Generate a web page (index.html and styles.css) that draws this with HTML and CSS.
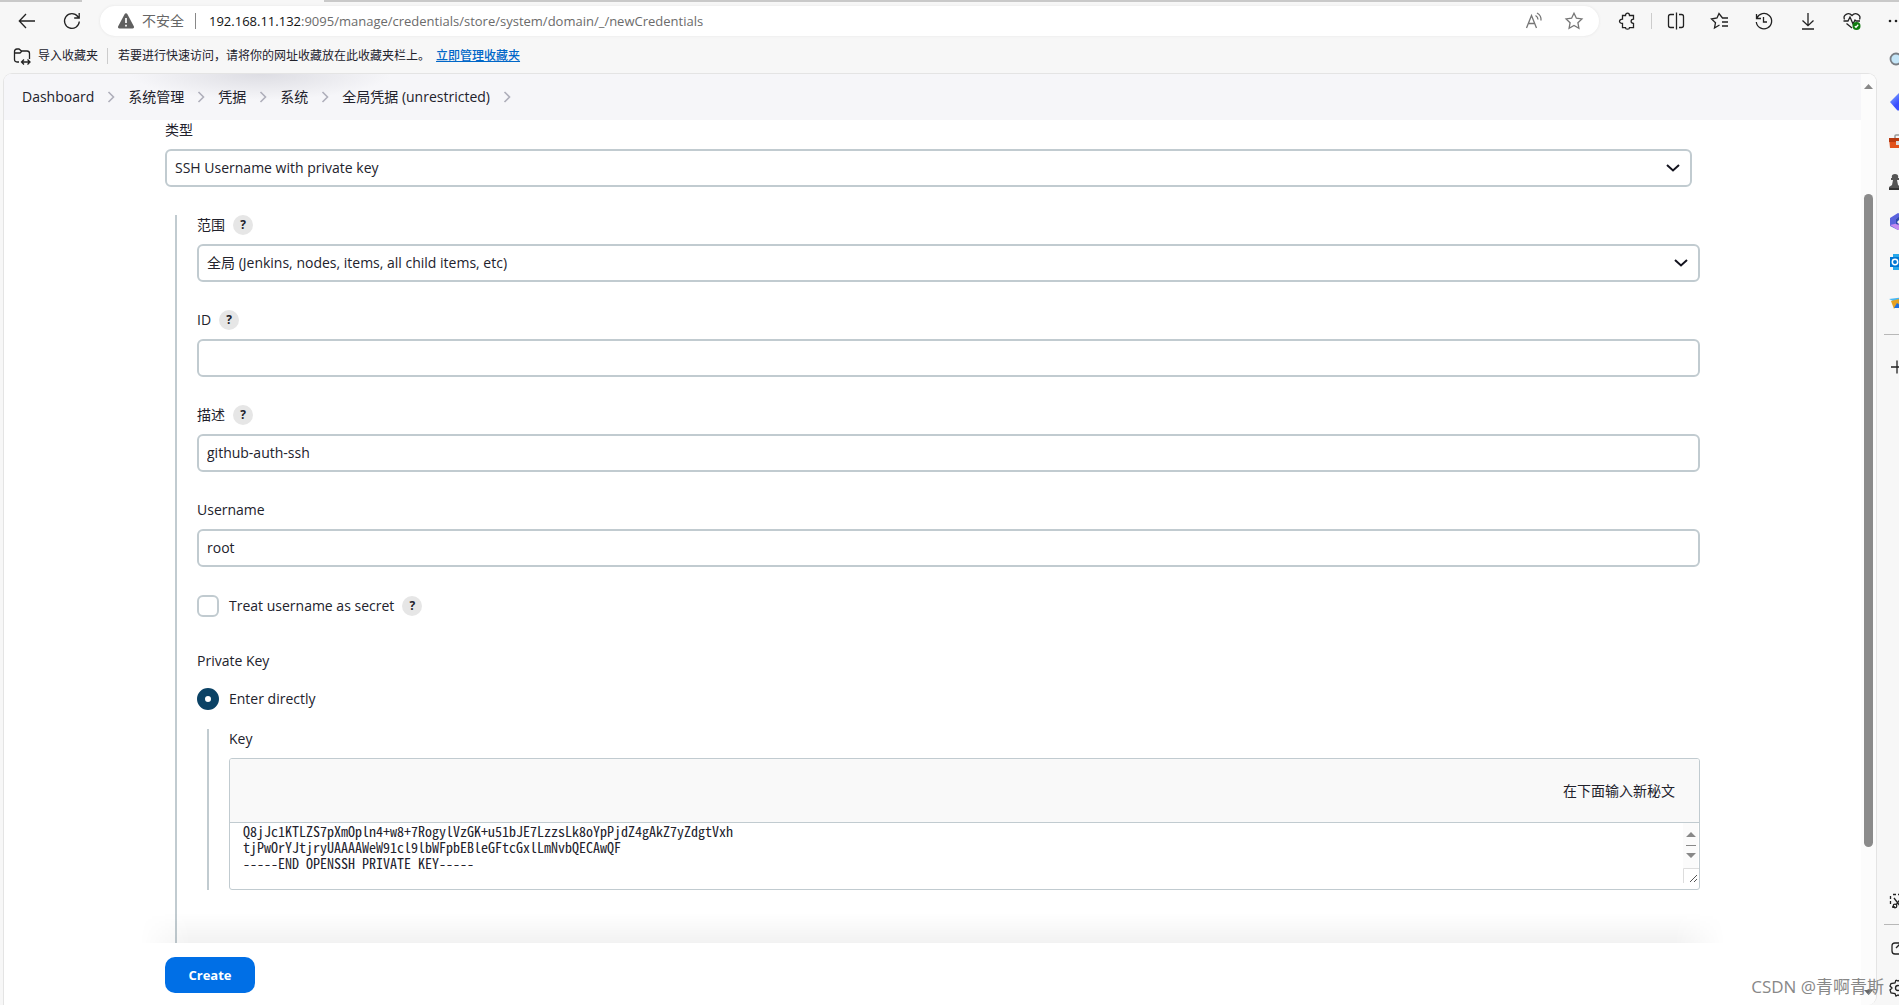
FILE: index.html
```html
<!DOCTYPE html>
<html lang="zh-CN">
<head>
<meta charset="utf-8">
<title>New credentials</title>
<link rel="stylesheet" href="styles.css">
</head>
<body>
<svg class="defs" aria-hidden="true">
  <symbol id="chev" viewBox="0 0 8 12"><path d="M1.5 1l5 5-5 5" fill="none" stroke="#aeaeba" stroke-width="1.6"/></symbol>
</svg>
<div class="browser">
  <header class="chrome">
    <div class="tabline"><span class="tabgap"></span></div>
    <div class="toolbar">
      <button class="tool" aria-label="Back"><svg width="20" height="20" viewBox="0 0 20 20"><path d="M18 10H2.5M9 3L2.3 10 9 17"/></svg></button>
      <button class="tool reload" aria-label="Reload"><svg width="20" height="20" viewBox="0 0 20 20"><path d="M17.3 10.5A7.4 7.4 0 1 1 15.8 5.5L17 7M17.2 2v5h-5"/></svg></button>
      <div class="address">
        <svg class="warn" width="18" height="18" viewBox="0 0 18 18"><path d="M9 1.2c.6 0 1 .3 1.300.8l6.500 12.300c.6 1.200 0 2.200-1.200 2.200H2.400c-1.200 0-1.800-1-1.200-2.200L7.700 2c.3-.5.7-.8 1.300-.8z" fill="#5f5f5f"/><path d="M9 6v5M9 12.800v1.600" stroke="#fff" stroke-width="1.700"/></svg>
        <span class="insecure">不安全</span>
        <span class="rule"></span>
        <span class="url"><b>192.168.11.132</b>:9095/manage/credentials/store/system/domain/_/newCredentials</span>
        <button class="tool grey" aria-label="Read aloud"><svg width="20" height="20" viewBox="0 0 20 20"><path d="M2.500 17L7.500 4.500l5 12.500M4.300 12.500h6.400M11.500 4.500q2.500 1.500 2.500 4M13 2q4.500 2.500 4 7.500"/></svg></button>
        <button class="tool grey" aria-label="Favorite"><svg width="20" height="20" viewBox="0 0 20 20"><path d="M10 2.200l2.400 5 5.500.7-4 3.800 1 5.500-4.900-2.700-4.900 2.700 1-5.500-4-3.800 5.500-.7z"/></svg></button>
      </div>
      <nav class="tools">
        <button class="tool" aria-label="Extensions"><svg width="20" height="20" viewBox="0 0 20 20"><path d="M5.500 4.500H8.500c0-3.300 4-3.300 4 0H16.500v3.700c-3.200.2-3.200 4.100 0 4.300v4.200H12.500c0 2-4 2-4 0H5.500v-4.200c-4 0-4-4.300 0-4.300z"/></svg></button>
        <span class="rule light"></span>
        <button class="tool" aria-label="Split screen"><svg width="20" height="20" viewBox="0 0 20 20"><path d="M10.500 1.500v17M8 3.500H4.500q-2 0-2 2v9q0 2 2 2H8M13 3.500h2.500q2 0 2 2v9q0 2-2 2H13"/></svg></button>
        <button class="tool" aria-label="Favorites"><svg width="20" height="20" viewBox="0 0 20 20"><path d="M18 7h-5.500L9 2.500 7 7l-5.500 1 4 3.700-1 5.300L9.500 14M12 11h6M12 15h6"/></svg></button>
        <button class="tool" aria-label="History"><svg width="20" height="20" viewBox="0 0 20 20"><path d="M2.500 3v4.500H7M2.800 7.300A7.700 7.700 0 1 1 2.300 11M9.500 6v5H13"/></svg></button>
        <button class="tool" aria-label="Downloads"><svg width="20" height="20" viewBox="0 0 20 20"><path d="M10 2v12.500M4.500 9.500l5.500 5.200 5.500-5.200M4 18h12"/></svg></button>
        <button class="tool" aria-label="Performance"><svg width="20" height="20" viewBox="0 0 20 20"><path d="M2.500 8.500C.5 4 6.500.5 10 4.500c3.500-4 9.500-.5 7.500 4M1.500 10H6l2-4 3 7 2-4 1 1h4M4.500 12.500L10 17"/><circle cx="14.500" cy="15" r="4" fill="#107c10" stroke="none"/><path d="M12.800 15.300l1.200 1 2.200-2.500" stroke="#fff"/></svg></button>
        <button class="tool" aria-label="More"><svg width="20" height="20" viewBox="0 0 20 20"><g fill="#222" stroke="none"><circle cx="4" cy="10" r="1.300"/><circle cx="10" cy="10" r="1.300"/><circle cx="16" cy="10" r="1.300"/></g></svg></button>
      </nav>
    </div>
    <div class="bookmarks">
      <svg class="folder" width="18" height="18" viewBox="0 0 18 18"><path d="M6 15H4q-2.500 0-2.500-2.500v-8Q1.500 2 4 2h2l2.500 2H14q2.500 0 2.500 2.500V12M1.500 6H7l2-2M16 15H9M11 12.500L8.500 15l2.500 2.500M14.500 12.500L17 15l-2.500 2.500"/></svg>
      <span>导入收藏夹</span>
      <span class="rule light"></span>
      <span class="hint">若要进行快速访问，请将你的网址收藏放在此收藏夹栏上。</span>
      <a href="#manage">立即管理收藏夹</a>
    </div>
  </header>

  <div class="body">
    <div class="page">
      <main class="content">
        <nav class="crumbs">
          <a href="#dashboard">Dashboard</a><svg width="8" height="12"><use href="#chev"/></svg>
          <a href="#manage-jenkins">系统管理</a><svg width="8" height="12"><use href="#chev"/></svg>
          <a href="#credentials">凭据</a><svg width="8" height="12"><use href="#chev"/></svg>
          <a href="#system">系统</a><svg width="8" height="12"><use href="#chev"/></svg>
          <a href="#domain">全局凭据 (unrestricted)</a><svg width="8" height="12"><use href="#chev"/></svg>
        </nav>
        <form class="form">
          <div class="kind">
            <label class="label" for="kind">类型</label>
            <select class="field" id="kind"><option>SSH Username with private key</option></select>
          </div>
          <div class="nested">
            <div class="row">
              <div class="label"><label for="scope">范围</label><button type="button" class="help">?</button></div>
              <select class="field" id="scope"><option>全局 (Jenkins, nodes, items, all child items, etc)</option></select>
            </div>
            <div class="row">
              <div class="label"><label for="cid">ID</label><button type="button" class="help">?</button></div>
              <input class="field" id="cid" type="text">
            </div>
            <div class="row">
              <div class="label"><label for="desc">描述</label><button type="button" class="help">?</button></div>
              <input class="field" id="desc" type="text" value="github-auth-ssh">
            </div>
            <div class="row">
              <div class="label"><label for="user">Username</label></div>
              <input class="field" id="user" type="text" value="root">
            </div>
            <div class="choice">
              <input type="checkbox" id="secret"><label for="secret">Treat username as secret</label><button type="button" class="help">?</button>
            </div>
            <div class="label keytitle">Private Key</div>
            <div class="choice">
              <input type="radio" id="direct" name="source" checked><label for="direct">Enter directly</label>
            </div>
            <div class="keygroup">
              <label class="label" for="key">Key</label>
              <div class="secretbox">
                <div class="secrethead">在下面输入新秘文</div>
                <div class="secretbody">
                  <textarea id="key" spellcheck="false">Q8jJc1KTLZS7pXmOpln4+w8+7RogylVzGK+u51bJE7LzzsLk8oYpPjdZ4gAkZ7yZdgtVxh
tjPwOrYJtjryUAAAAWeW91cl9lbWFpbEBleGFtcGxlLmNvbQECAwQF
-----END OPENSSH PRIVATE KEY-----</textarea>
                  <svg width="16" height="60" viewBox="0 0 16 60"><path d="M0 0h15v45H0z" fill="#fbfbfb"/><path d="M3 14l5-5 5 5zM3 30l5 5 5-5z" fill="#888"/><path d="M3 22.500h10" stroke="#888"/><path d="M.5 60V45.500H16" fill="none" stroke="#ddd"/><path d="M7 59l7-7M11 59l3-3" stroke="#555"/></svg>
                </div>
              </div>
            </div>
          </div>
          <div class="actions"><button type="submit" class="create">Create</button></div>
        </form>
      </main>
      <div class="scroll">
        <svg width="9" height="5" viewBox="0 0 9 5"><path d="M0 5l4.500-5L9 5z" fill="#888"/></svg>
        <div class="track"><div class="thumb"></div></div>
        <svg width="9" height="5" viewBox="0 0 9 5"><path d="M0 0l4.500 5L9 0z" fill="#666"/></svg>
      </div>
    </div>
    <aside class="side">
      <svg class="search" width="24" height="24" viewBox="0 0 24 24"><circle cx="7" cy="12" r="5.500" fill="#c4e6f8" stroke="#7a7f85" stroke-width="1.800"/></svg>
      <svg class="solid" width="24" height="24" viewBox="0 0 24 24"><defs><linearGradient id="tag" x2="1" y2="1"><stop stop-color="#8ab4ff"/><stop offset=".5" stop-color="#3b4fff"/></linearGradient></defs><path d="M1 12l9-9h10v10l-9 7q-2 1-3 0z" fill="url(#tag)"/></svg>
      <svg class="solid" width="24" height="24" viewBox="0 0 24 24"><path d="M6 9V6q0-1 1-1h10v4" fill="none" stroke="#999" stroke-width="1.500"/><path d="M0 8h24v10H1z" fill="#e2521b"/><path d="M0 8h24v4H0z" fill="#b93a10"/><path d="M7 11h4v4H7z" fill="#ddd"/></svg>
      <svg class="solid" width="24" height="24" viewBox="0 0 24 24"><path d="M0 20v-3l3-2 1-5H2V8h1q-1-4 3-4t3 4h1v2H8l1 5 3 2v3z" fill="#555"/><path d="M0 18h12v2H0z" fill="#333"/></svg>
      <svg class="solid" width="24" height="24" viewBox="0 0 24 24"><path d="M9 3L1 8v8l8 4 3-5-5-1V9l8-3z" fill="#5a63dd"/><path d="M1 15l8 5 6-1v-5l-5-1z" fill="#c68bf0"/><path d="M7 9l3-2v3l-2 2 2 3-3-1z" fill="#2f4aa8"/></svg>
      <svg class="solid" width="24" height="24" viewBox="0 0 24 24"><path d="M4 4h16v16H4z" fill="#28a8ea"/><path d="M1 7h12v10H1z" fill="#0078d4"/><circle cx="6" cy="12" r="2.700" fill="none" stroke="#fff" stroke-width="1.500"/></svg>
      <svg class="solid" width="24" height="24" viewBox="0 0 24 24"><path d="M0 9l22-3-8 10z" fill="#45b8f5"/><path d="M2 11l20-5-15 10-2 3z" fill="#e7a122"/><path d="M5 18l3-5 8 5z" fill="#1f6fe0"/></svg>
      <span class="line"></span>
      <svg width="24" height="24" viewBox="0 0 24 24"><path d="M2 12h13M8 5.500v13"/></svg>
      <span class="space"></span>
      <svg width="24" height="24" viewBox="0 0 24 24"><path d="M4 5.500H15M1.500 7v9M3 18h3" stroke-dasharray="3 2"/><path d="M5 9l6 8M12 9l-5 7"/><circle cx="6" cy="17" r="1.800"/></svg>
      <span class="line tight"></span>
      <svg width="24" height="24" viewBox="0 0 24 24"><path d="M10 7H6q-3 0-3 3v5q0 3 3 3h8M7 12l4-4"/></svg>
      <svg width="24" height="24" viewBox="0 0 24 24"><path d="M7 4l2 1 2-1v3l3 1M7 4L6 7 2 7.500 1 10l2 2-2 2 1 3 4 .500L7 20l2-1 2 1"/><circle cx="9" cy="12" r="2.500"/></svg>
    </aside>
  </div>
  <div class="watermark">CSDN @青啊青斯</div>
</div>
</body>
</html>
```

FILE: styles.css
```css
* { box-sizing: border-box; }

body {
  margin: 0;
  background: #f7f7f7;
  color: #22222c;
  font: 14px/20px "Open Sans", "Noto Sans CJK SC", sans-serif;
}

button, input, select, textarea { font: inherit; color: inherit; }
button { border: 0; padding: 0; background: none; }
a { color: inherit; text-decoration: none; }
svg { flex: none; display: block; }

.defs { display: none; }

.browser {
  position: relative;
  display: flex;
  flex-direction: column;
  height: 100vh;
  overflow: hidden;
}

/* Browser toolbar */
.chrome { flex: none; height: 73px; }
.tabline { height: 2px; background: #c9c9c9; padding-left: 82px; }
.tabgap { display: block; width: 242px; height: 2px; background: #f7f7f7; }

.toolbar {
  display: flex;
  align-items: center;
  height: 38px;
  padding-left: 17px;
  overflow: hidden;
}
.tool { flex: none; width: 20px; height: 20px; }
.tool svg, .folder, .side svg {
  fill: none;
  stroke: #222;
  stroke-width: 1.3;
}
.reload { margin-left: 25px; }
.grey svg { stroke: #767676; }

.address {
  flex: 1;
  display: flex;
  align-items: center;
  height: 30px;
  margin-left: 18px;
  padding: 0 15px 0 17px;
  border-radius: 15px;
  background: #fff;
  box-shadow: 0 0 3px #e4e4e4;
}
.insecure { margin-left: 7px; color: #666; }
.rule { flex: none; width: 1px; height: 16px; margin: 0 13px 0 11px; background: #888; }
.rule.light { background: #ccc; }
.url { flex: 1; color: #6b6b6b; font-size: 13px; }
.url b { color: #111; font-weight: 400; }
.address .tool + .tool { margin-left: 20px; }

.tools {
  display: flex;
  align-items: center;
  gap: 24px;
  width: 282px;
  margin-left: 18px;
}
.tools .rule { margin: 0 -10px; }

.bookmarks {
  display: flex;
  align-items: center;
  height: 32px;
  padding-left: 13px;
  font-size: 12px;
}
.folder { margin-right: 7px; }
.bookmarks .rule { margin: 0 10px 0 9px; }
.bookmarks a { margin-left: 6px; color: #0067c8; font-weight: 500; text-decoration: underline; }

/* Page viewport and sidebar */
.body { flex: 1; display: flex; min-height: 0; }

.page {
  flex: 1;
  display: flex;
  min-width: 0;
  margin-left: 3px;
  border: 1px solid #e4e4e4;
  border-bottom: 0;
  border-radius: 9px 9px 9px 0;
  background: #fff;
  overflow: hidden;
}
.content { flex: 1; display: flex; flex-direction: column; min-width: 0; }

.crumbs {
  flex: none;
  display: flex;
  align-items: center;
  gap: 13px;
  height: 46px;
  padding-left: 18px;
  background: radial-gradient(ellipse 130px 26px at 257px 0, #dddde3, #f6f6f9) no-repeat #f6f6f9;
}

.form {
  flex: 1;
  display: flex;
  flex-direction: column;
  min-height: 0;
  padding: 0 161px;
}
.label { display: flex; align-items: center; gap: 8px; height: 20px; margin-bottom: 9px; }
.kind { padding-right: 8px; margin-bottom: 28px; }

.field {
  display: block;
  width: 100%;
  height: 38px;
  padding: 0 8px;
  border: 2px solid #c1cbd0;
  border-radius: 6px;
  background: #fff;
  outline: 0;
}
input.field { padding-bottom: 1px; }
select.field {
  appearance: none;
  background: #fff url("data:image/svg+xml,%3Csvg xmlns='http://www.w3.org/2000/svg' width='14' height='8'%3E%3Cpath d='M1 1l6 5.500L13 1' fill='none' stroke='%2314141f' stroke-width='2'/%3E%3C/svg%3E") no-repeat right 10px center;
}

.nested {
  flex: 1;
  min-height: 0;
  margin-left: 10px;
  padding-left: 20px;
  border-left: 2px solid #c1cbd0;
}
.row { margin-bottom: 28px; }

.help {
  width: 20px;
  height: 20px;
  border-radius: 50%;
  background: #e6e6e6;
  font-size: 12px;
  font-weight: 700;
  line-height: 20px;
}

.choice { display: flex; align-items: center; height: 22px; }
.choice input {
  appearance: none;
  width: 22px;
  height: 22px;
  margin: 0 10px 0 0;
  border: 2px solid #c1cbd0;
  border-radius: 6px;
  background: #fff;
}
.choice input[type="radio"] { border: 8px solid #0b4265; border-radius: 50%; }
.choice .help { margin-left: 8px; }
.keytitle { margin: 34px 0 17px; }

.keygroup {
  margin: 19px 0 0 10px;
  padding-left: 20px;
  border-left: 2px solid #c1cbd0;
}
.secretbox { border: 1px solid #c1cbd0; border-radius: 3px; overflow: hidden; }
.secrethead {
  display: flex;
  align-items: center;
  justify-content: flex-end;
  height: 64px;
  padding-right: 24px;
  border-bottom: 1px solid #c1cbd0;
  background: #f9f9f9;
}
.secretbody { display: flex; height: 66px; }
.secretbody textarea {
  flex: 1;
  height: 60px;
  padding: 0 13px;
  border: 0;
  outline: 0;
  resize: none;
  overflow: hidden;
  font: 14px/16px "Noto Sans Mono CJK SC", monospace;
}

.actions {
  position: relative;
  flex: none;
  height: 62px;
  padding-top: 14px;
  background: #fff;
}
.actions::before {
  content: "";
  position: absolute;
  inset: -30px -25px 100%;
  background: linear-gradient(transparent, rgba(0, 0, 0, 0.05));
  -webkit-mask-image: linear-gradient(90deg, transparent, #000 50px, #000 calc(100% - 50px), transparent);
  mask-image: linear-gradient(90deg, transparent, #000 50px, #000 calc(100% - 50px), transparent);
}
.create {
  width: 90px;
  height: 36px;
  border-radius: 10px;
  background: #006fe6;
  color: #fff;
  font-size: 13px;
  font-weight: 700;
}

.scroll {
  flex: none;
  display: flex;
  flex-direction: column;
  align-items: center;
  width: 15px;
  padding: 10px 0;
  background: #fcfcfc;
}
.track { flex: 1; padding-top: 105px; }
.thumb { width: 9px; height: 82%; border-radius: 5px; background: #8b8b8b; }

.side {
  flex: none;
  display: flex;
  flex-direction: column;
  gap: 16px;
  width: 22px;
  margin-top: -26px;
  padding: 0 0 5px 12px;
  overflow: hidden;
}
.side .search { margin-bottom: 3px; }
.side .solid { stroke: none; }
.line { flex: none; width: 24px; height: 1px; margin: 4px 0 4px -5px; background: #b8b8b8; }
.line.tight { margin-top: -5px; margin-bottom: -5px; }
.space { flex: 1; }

.watermark {
  position: absolute;
  right: 15px;
  bottom: 6px;
  color: #888;
  font-size: 17px;
  line-height: 24px;
}
```
